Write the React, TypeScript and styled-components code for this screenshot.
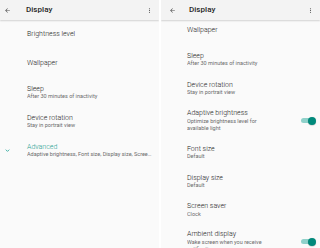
import React from "react";
import styled, { createGlobalStyle } from "styled-components";

const Global = createGlobalStyle`
  html, body { margin: 0; padding: 0; background: #ffffff; }
  body { font-family: Roboto, "Noto Sans", Arial, sans-serif; -webkit-font-smoothing: antialiased; }
`;

const Screen = styled.div`
  width: 320px;
  height: 248px;
  display: flex;
  gap: 2px;
  background: #ffffff;
  overflow: hidden;
`;

const Panel = styled.div<{ $w: number }>`
  width: ${(p) => p.$w}px;
  height: 248px;
  display: flex;
  flex-direction: column;
  background: #fafafa;
  overflow: hidden;
`;

const Header = styled.div<{ $titleX: number }>`
  position: relative;
  z-index: 1;
  height: 20px;
  flex: none;
  display: grid;
  grid-template-columns: ${(p) => p.$titleX}px 1fr 16px;
  align-items: center;
  background: #f3f3f3;
  box-shadow: 0 1px 1.5px rgba(0, 0, 0, 0.16);
`;

const IconSlot = styled.div<{ $pad: number }>`
  display: flex;
  align-items: center;
  padding-left: ${(p) => p.$pad}px;
`;

const Title = styled.div`
  font-size: 8px;
  font-weight: 500;
  color: #262626;
  letter-spacing: 0.05px;
  line-height: 10px;
`;

const Scroll = styled.div`
  flex: 1;
  overflow: hidden;
`;

const List = styled.div<{ $offset: number }>`
  display: flex;
  flex-direction: column;
  margin-top: ${(p) => -p.$offset}px;
`;

const Row = styled.div<{ $h: number; $lead: number }>`
  height: ${(p) => p.$h}px;
  flex: none;
  display: grid;
  grid-template-columns: ${(p) => p.$lead}px 1fr auto;
  align-items: center;
  padding-right: 4px;
  box-sizing: border-box;
`;

const Lead = styled.div`
  display: flex;
  align-items: center;
  padding-left: 4px;
  margin-top: -1px;
`;

const Texts = styled.div`
  display: flex;
  flex-direction: column;
  min-width: 0;
`;

const ItemTitle = styled.div<{ $accent?: boolean }>`
  font-size: 7px;
  line-height: 8.5px;
  font-weight: 300;
  color: ${(p) => (p.$accent ? "#1f9e91" : "#222222")};
`;

const ItemSub = styled.div<{ $clip?: boolean }>`
  font-size: 5.5px;
  line-height: 7px;
  color: #6a6a6a;
  max-width: ${(p) => (p.$clip ? "125px" : "90px")};
  white-space: nowrap;
  overflow: hidden;
  text-overflow: ellipsis;
`;

const Track = styled.div`
  position: relative;
  width: 11px;
  height: 4.5px;
  border-radius: 3px;
  background: #8fd1ca;
  margin-right: 4px;
`;

const Thumb = styled.div`
  position: absolute;
  right: -4px;
  top: 50%;
  width: 8px;
  height: 8px;
  margin-top: -4px;
  border-radius: 50%;
  background: #00897b;
  box-shadow: 0 0.5px 1px rgba(0, 0, 0, 0.25);
`;

const Back = () => (
  <svg width="7" height="7" viewBox="0 0 24 24">
    <path d="M20 11H7.83l5.59-5.59L12 4l-8 8 8 8 1.41-1.41L7.83 13H20v-2z" fill="#4a4a4a" />
  </svg>
);

const More = () => (
  <svg width="7" height="7" viewBox="0 0 24 24">
    <path
      d="M12 8c1.1 0 2-.9 2-2s-.9-2-2-2-2 .9-2 2 .9 2 2 2zm0 2c-1.1 0-2 .9-2 2s.9 2 2 2 2-.9 2-2-.9-2-2-2zm0 6c-1.1 0-2 .9-2 2s.9 2 2 2 2-.9 2-2-.9-2-2-2z"
      fill="#4a4a4a"
    />
  </svg>
);

const Chevron = () => (
  <svg width="7" height="7" viewBox="0 0 24 24">
    <path d="M6 9l6 6 6-6" fill="none" stroke="#2aa89b" strokeWidth="3" />
  </svg>
);

type Item = {
  title: string;
  sub?: string[];
  h: number;
  toggle?: boolean;
  accent?: boolean;
  chevron?: boolean;
  clip?: boolean;
};

const leftItems: Item[] = [
  { title: "Brightness level", h: 29 },
  { title: "Wallpaper", h: 29 },
  { title: "Sleep", sub: ["After 30 minutes of inactivity"], h: 29 },
  { title: "Device rotation", sub: ["Stay in portrait view"], h: 29 },
  {
    title: "Advanced",
    sub: ["Adaptive brightness, Font size, Display size, Screen saver, Ambient display"],
    h: 29,
    accent: true,
    chevron: true,
    clip: true,
  },
];

const rightItems: Item[] = [
  { title: "Wallpaper", h: 29 },
  { title: "Sleep", sub: ["After 30 minutes of inactivity"], h: 29 },
  { title: "Device rotation", sub: ["Stay in portrait view"], h: 29 },
  { title: "Adaptive brightness", sub: ["Optimize brightness level for", "available light"], h: 35, toggle: true },
  { title: "Font size", sub: ["Default"], h: 29 },
  { title: "Display size", sub: ["Default"], h: 29 },
  { title: "Screen saver", sub: ["Clock"], h: 28 },
  { title: "Ambient display", sub: ["Wake screen when you receive", "notifications"], h: 35, toggle: true },
];

const SettingsPanel = ({
  width,
  titleX,
  lead,
  offset,
  items,
  backPad,
}: {
  width: number;
  titleX: number;
  lead: number;
  offset: number;
  items: Item[];
  backPad: number;
}) => (
  <Panel $w={width}>
    <Header $titleX={titleX}>
      <IconSlot $pad={backPad}>
        <Back />
      </IconSlot>
      <Title>Display</Title>
      <IconSlot $pad={3}>
        <More />
      </IconSlot>
    </Header>
    <Scroll>
      <List $offset={offset}>
        {items.map((it) => (
          <Row key={it.title} $h={it.h} $lead={lead}>
            <Lead>{it.chevron ? <Chevron /> : null}</Lead>
            <Texts>
              <ItemTitle $accent={it.accent}>{it.title}</ItemTitle>
              {it.sub?.map((s) => (
                <ItemSub key={s} $clip={it.clip}>
                  {s}
                </ItemSub>
              ))}
            </Texts>
            {it.toggle ? (
              <Track>
                <Thumb />
              </Track>
            ) : (
              <span />
            )}
          </Row>
        ))}
      </List>
    </Scroll>
  </Panel>
);

export default function App() {
  return (
    <>
      <Global />
      <Screen>
        <SettingsPanel width={159} titleX={26} lead={27} offset={0} items={leftItems} backPad={4} />
        <SettingsPanel width={159} titleX={28} lead={26} offset={4} items={rightItems} backPad={8} />
      </Screen>
    </>
  );
}
